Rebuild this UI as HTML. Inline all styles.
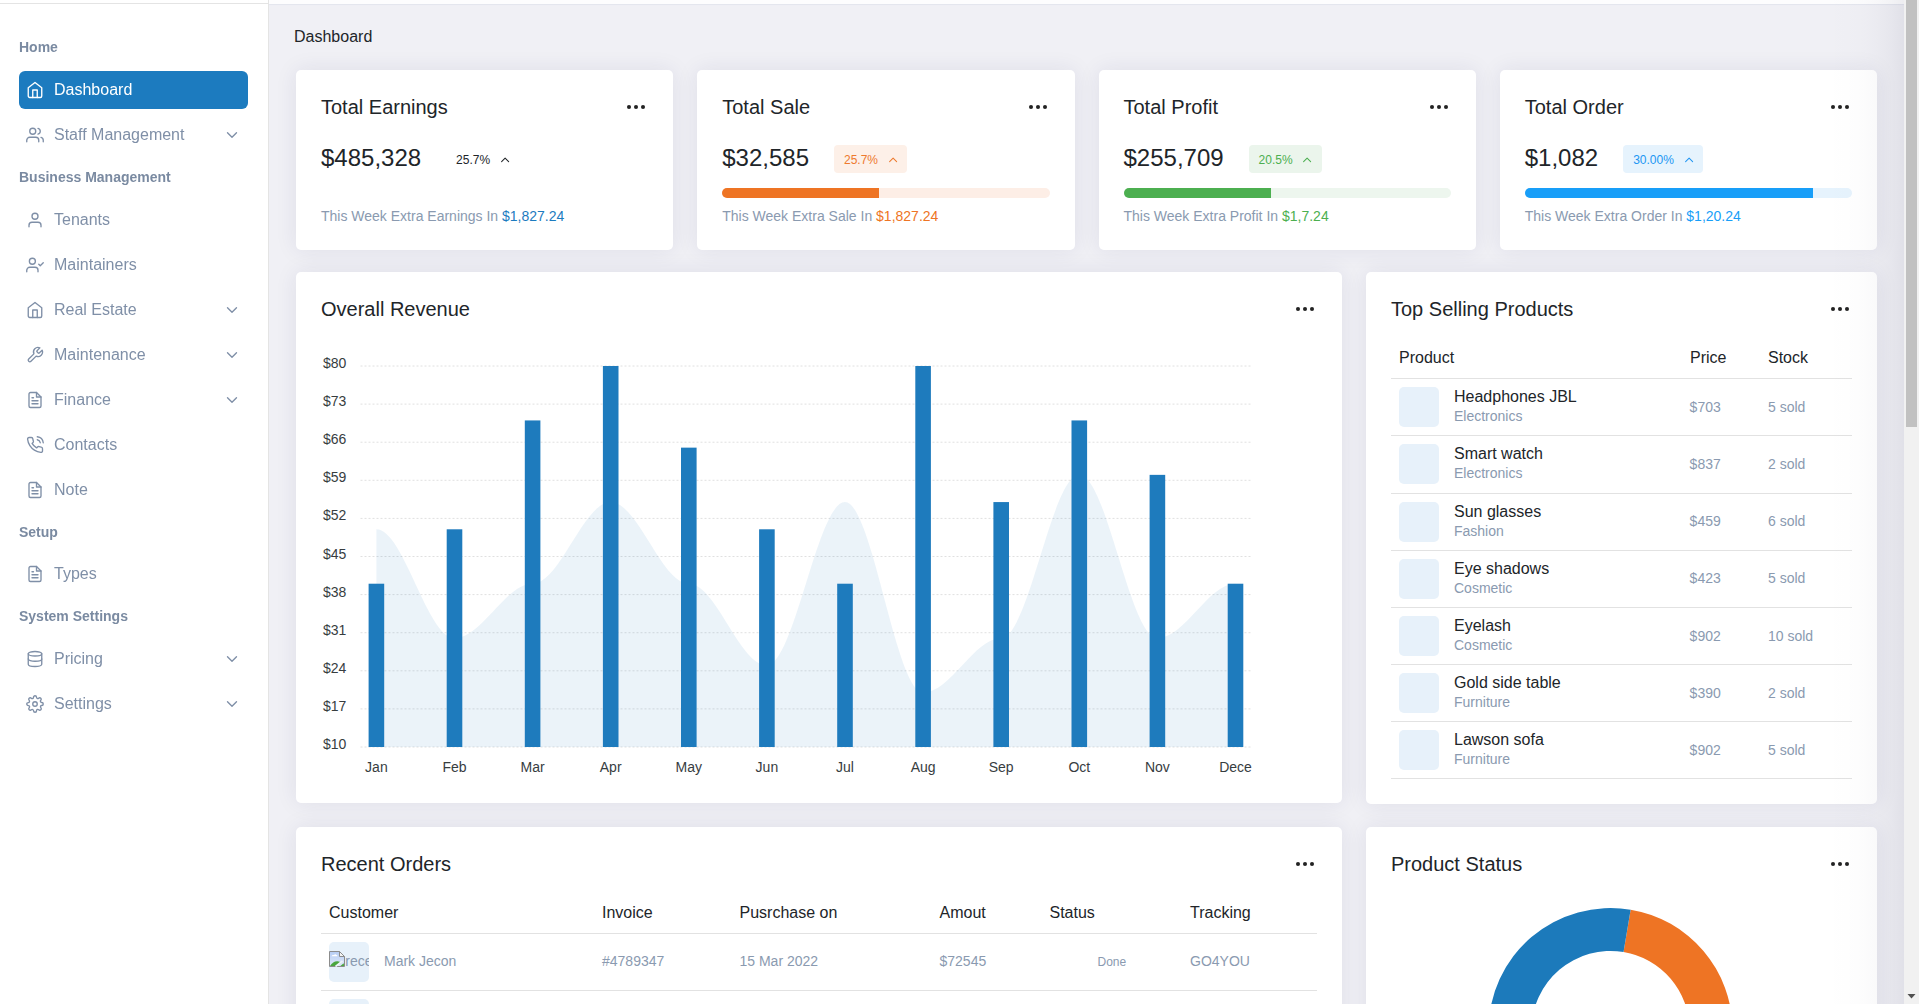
<!DOCTYPE html>
<html><head><meta charset="utf-8"><style>
html,body{margin:0;padding:0;width:1919px;height:1004px;overflow:hidden;background:#f0f0f5;font-family:"Liberation Sans", sans-serif}
.t{position:absolute;white-space:nowrap}
.ic{position:absolute;overflow:visible}
.sidebar{position:absolute;left:0;top:0;width:268px;height:1004px;background:#fff;border-right:1px solid #e4e4e4}
.card{position:absolute;background:#fff;border-radius:5px;box-shadow:0 0 22px rgba(40,40,90,0.085)}
.badge{position:absolute;height:28px;border-radius:4px;font-size:12px}
</style></head><body>
<div style="position:absolute;left:269px;top:0;width:1635px;height:4px;background:#fdfdfe;box-shadow:0 1px 1px rgba(60,90,160,0.07)"></div><div class="t" style="left:294px;top:29px;font-size:16px;line-height:16px;color:#212529;font-weight:normal;">Dashboard</div><div class="card" style="left:296.0px;top:70px;width:377.25px;height:180px"></div><div class="t" style="left:321.0px;top:97px;font-size:20px;line-height:20px;color:#212529;font-weight:normal;">Total Earnings</div><svg class="ic" style="left:624.25px;top:95px" width="24" height="24"><circle cx="5" cy="12" r="2.05" fill="#222"/><circle cx="12" cy="12" r="2.05" fill="#222"/><circle cx="19" cy="12" r="2.05" fill="#222"/></svg><div class="t" style="left:321.0px;top:146px;font-size:24px;line-height:24px;color:#212529;font-weight:normal;">$485,328</div><div class="badge" style="left:446.1px;top:145px;width:73px;background:transparent;color:#212529"><span style="position:absolute;left:10px;top:1px;line-height:28px">25.7%</span></div><svg class="ic" style="left:497.8px;top:152px" width="14" height="14" viewBox="-0.2 -1.5 24 24" fill="none" stroke="#212529" stroke-width="1.8" stroke-linecap="round" stroke-linejoin="round"><polyline points="18 15 12 9 6 15"/></svg><div class="t" style="left:321.0px;top:209px;font-size:14px;line-height:14px;color:#8a9ab0;font-weight:normal;">This Week Extra Earnings In <span style="color:#1c7bbf">$1,827.24</span></div><div class="card" style="left:697.25px;top:70px;width:377.25px;height:180px"></div><div class="t" style="left:722.25px;top:97px;font-size:20px;line-height:20px;color:#212529;font-weight:normal;">Total Sale</div><svg class="ic" style="left:1025.5px;top:95px" width="24" height="24"><circle cx="5" cy="12" r="2.05" fill="#222"/><circle cx="12" cy="12" r="2.05" fill="#222"/><circle cx="19" cy="12" r="2.05" fill="#222"/></svg><div class="t" style="left:722.25px;top:146px;font-size:24px;line-height:24px;color:#212529;font-weight:normal;">$32,585</div><div class="badge" style="left:834.0px;top:145px;width:73px;background:#fdf0e8;color:#ee7a2e"><span style="position:absolute;left:10px;top:1px;line-height:28px">25.7%</span></div><svg class="ic" style="left:885.7px;top:152px" width="14" height="14" viewBox="-0.2 -1.5 24 24" fill="none" stroke="#ee7a2e" stroke-width="1.8" stroke-linecap="round" stroke-linejoin="round"><polyline points="18 15 12 9 6 15"/></svg><div style="position:absolute;left:722.25px;top:188px;width:327.25px;height:10px;border-radius:5px;background:#fdeee6;overflow:hidden"><div style="width:47.9%;height:10px;background:#ee7424"></div></div><div class="t" style="left:722.25px;top:209px;font-size:14px;line-height:14px;color:#8a9ab0;font-weight:normal;">This Week Extra Sale In <span style="color:#ee7424">$1,827.24</span></div><div class="card" style="left:1098.5px;top:70px;width:377.25px;height:180px"></div><div class="t" style="left:1123.5px;top:97px;font-size:20px;line-height:20px;color:#212529;font-weight:normal;">Total Profit</div><svg class="ic" style="left:1426.75px;top:95px" width="24" height="24"><circle cx="5" cy="12" r="2.05" fill="#222"/><circle cx="12" cy="12" r="2.05" fill="#222"/><circle cx="19" cy="12" r="2.05" fill="#222"/></svg><div class="t" style="left:1123.5px;top:146px;font-size:24px;line-height:24px;color:#212529;font-weight:normal;">$255,709</div><div class="badge" style="left:1248.6px;top:145px;width:73px;background:#ebf5ec;color:#4caf50"><span style="position:absolute;left:10px;top:1px;line-height:28px">20.5%</span></div><svg class="ic" style="left:1300.3px;top:152px" width="14" height="14" viewBox="-0.2 -1.5 24 24" fill="none" stroke="#4caf50" stroke-width="1.8" stroke-linecap="round" stroke-linejoin="round"><polyline points="18 15 12 9 6 15"/></svg><div style="position:absolute;left:1123.5px;top:188px;width:327.25px;height:10px;border-radius:5px;background:#edf6ee;overflow:hidden"><div style="width:45.2%;height:10px;background:#4caf50"></div></div><div class="t" style="left:1123.5px;top:209px;font-size:14px;line-height:14px;color:#8a9ab0;font-weight:normal;">This Week Extra Profit In <span style="color:#4caf50">$1,7.24</span></div><div class="card" style="left:1499.75px;top:70px;width:377.25px;height:180px"></div><div class="t" style="left:1524.75px;top:97px;font-size:20px;line-height:20px;color:#212529;font-weight:normal;">Total Order</div><svg class="ic" style="left:1828.0px;top:95px" width="24" height="24"><circle cx="5" cy="12" r="2.05" fill="#222"/><circle cx="12" cy="12" r="2.05" fill="#222"/><circle cx="19" cy="12" r="2.05" fill="#222"/></svg><div class="t" style="left:1524.75px;top:146px;font-size:24px;line-height:24px;color:#212529;font-weight:normal;">$1,082</div><div class="badge" style="left:1623.15px;top:145px;width:80px;background:#e6f3fd;color:#2196f3"><span style="position:absolute;left:10px;top:1px;line-height:28px">30.00%</span></div><svg class="ic" style="left:1681.8500000000001px;top:152px" width="14" height="14" viewBox="-0.2 -1.5 24 24" fill="none" stroke="#2196f3" stroke-width="1.8" stroke-linecap="round" stroke-linejoin="round"><polyline points="18 15 12 9 6 15"/></svg><div style="position:absolute;left:1524.75px;top:188px;width:327.25px;height:10px;border-radius:5px;background:#e6f3fd;overflow:hidden"><div style="width:88.1%;height:10px;background:#189ef8"></div></div><div class="t" style="left:1524.75px;top:209px;font-size:14px;line-height:14px;color:#8a9ab0;font-weight:normal;">This Week Extra Order In <span style="color:#189ef8">$1,20.24</span></div><div class="card" style="left:296px;top:272px;width:1046px;height:531px"></div><div class="t" style="left:321px;top:299px;font-size:20px;line-height:20px;color:#212529;font-weight:normal;">Overall Revenue</div><svg class="ic" style="left:1293px;top:297px" width="24" height="24"><circle cx="5" cy="12" r="2.05" fill="#222"/><circle cx="12" cy="12" r="2.05" fill="#222"/><circle cx="19" cy="12" r="2.05" fill="#222"/></svg><svg style="position:absolute;left:0;top:0" width="1919" height="1004"><line x1="360.5" y1="747.00" x2="1251" y2="747.00" stroke="#e0e0e0" stroke-width="1" stroke-dasharray="2 2"/><line x1="360.5" y1="708.90" x2="1251" y2="708.90" stroke="#e0e0e0" stroke-width="1" stroke-dasharray="2 2"/><line x1="360.5" y1="670.80" x2="1251" y2="670.80" stroke="#e0e0e0" stroke-width="1" stroke-dasharray="2 2"/><line x1="360.5" y1="632.70" x2="1251" y2="632.70" stroke="#e0e0e0" stroke-width="1" stroke-dasharray="2 2"/><line x1="360.5" y1="594.60" x2="1251" y2="594.60" stroke="#e0e0e0" stroke-width="1" stroke-dasharray="2 2"/><line x1="360.5" y1="556.50" x2="1251" y2="556.50" stroke="#e0e0e0" stroke-width="1" stroke-dasharray="2 2"/><line x1="360.5" y1="518.40" x2="1251" y2="518.40" stroke="#e0e0e0" stroke-width="1" stroke-dasharray="2 2"/><line x1="360.5" y1="480.30" x2="1251" y2="480.30" stroke="#e0e0e0" stroke-width="1" stroke-dasharray="2 2"/><line x1="360.5" y1="442.20" x2="1251" y2="442.20" stroke="#e0e0e0" stroke-width="1" stroke-dasharray="2 2"/><line x1="360.5" y1="404.10" x2="1251" y2="404.10" stroke="#e0e0e0" stroke-width="1" stroke-dasharray="2 2"/><line x1="360.5" y1="366.00" x2="1251" y2="366.00" stroke="#e0e0e0" stroke-width="1" stroke-dasharray="2 2"/><path d="M376.40,529.29 C403.73,529.29 427.17,638.14 454.50,638.14 C481.83,638.14 505.26,583.71 532.60,583.71 C559.93,583.71 583.36,502.07 610.70,502.07 C638.03,502.07 661.46,583.71 688.80,583.71 C716.13,583.71 739.56,665.36 766.90,665.36 C794.24,665.36 817.66,502.07 845.00,502.07 C872.34,502.07 895.76,692.57 923.10,692.57 C950.43,692.57 973.86,638.14 1001.20,638.14 C1028.53,638.14 1051.96,474.86 1079.30,474.86 C1106.63,474.86 1130.07,638.14 1157.40,638.14 C1184.74,638.14 1208.16,583.71 1235.50,583.71 L1235.50,747 L376.40,747 Z" fill="#1e7bbd" fill-opacity="0.09"/><rect x="368.60" y="583.71" width="15.6" height="163.29" fill="#1e7bbd"/><rect x="446.70" y="529.29" width="15.6" height="217.71" fill="#1e7bbd"/><rect x="524.80" y="420.43" width="15.6" height="326.57" fill="#1e7bbd"/><rect x="602.90" y="366.00" width="15.6" height="381.00" fill="#1e7bbd"/><rect x="681.00" y="447.64" width="15.6" height="299.36" fill="#1e7bbd"/><rect x="759.10" y="529.29" width="15.6" height="217.71" fill="#1e7bbd"/><rect x="837.20" y="583.71" width="15.6" height="163.29" fill="#1e7bbd"/><rect x="915.30" y="366.00" width="15.6" height="381.00" fill="#1e7bbd"/><rect x="993.40" y="502.07" width="15.6" height="244.93" fill="#1e7bbd"/><rect x="1071.50" y="420.43" width="15.6" height="326.57" fill="#1e7bbd"/><rect x="1149.60" y="474.86" width="15.6" height="272.14" fill="#1e7bbd"/><rect x="1227.70" y="583.71" width="15.6" height="163.29" fill="#1e7bbd"/></svg><div class="t" style="left:323px;top:737px;font-size:14px;line-height:14px;color:#373d3f;font-weight:normal;">$10</div><div class="t" style="left:323px;top:699px;font-size:14px;line-height:14px;color:#373d3f;font-weight:normal;">$17</div><div class="t" style="left:323px;top:661px;font-size:14px;line-height:14px;color:#373d3f;font-weight:normal;">$24</div><div class="t" style="left:323px;top:623px;font-size:14px;line-height:14px;color:#373d3f;font-weight:normal;">$31</div><div class="t" style="left:323px;top:585px;font-size:14px;line-height:14px;color:#373d3f;font-weight:normal;">$38</div><div class="t" style="left:323px;top:547px;font-size:14px;line-height:14px;color:#373d3f;font-weight:normal;">$45</div><div class="t" style="left:323px;top:508px;font-size:14px;line-height:14px;color:#373d3f;font-weight:normal;">$52</div><div class="t" style="left:323px;top:470px;font-size:14px;line-height:14px;color:#373d3f;font-weight:normal;">$59</div><div class="t" style="left:323px;top:432px;font-size:14px;line-height:14px;color:#373d3f;font-weight:normal;">$66</div><div class="t" style="left:323px;top:394px;font-size:14px;line-height:14px;color:#373d3f;font-weight:normal;">$73</div><div class="t" style="left:323px;top:356px;font-size:14px;line-height:14px;color:#373d3f;font-weight:normal;">$80</div><div class="t" style="left:326.40px;width:100px;text-align:center;top:760px;font-size:14px;line-height:14px;color:#373d3f">Jan</div><div class="t" style="left:404.50px;width:100px;text-align:center;top:760px;font-size:14px;line-height:14px;color:#373d3f">Feb</div><div class="t" style="left:482.60px;width:100px;text-align:center;top:760px;font-size:14px;line-height:14px;color:#373d3f">Mar</div><div class="t" style="left:560.70px;width:100px;text-align:center;top:760px;font-size:14px;line-height:14px;color:#373d3f">Apr</div><div class="t" style="left:638.80px;width:100px;text-align:center;top:760px;font-size:14px;line-height:14px;color:#373d3f">May</div><div class="t" style="left:716.90px;width:100px;text-align:center;top:760px;font-size:14px;line-height:14px;color:#373d3f">Jun</div><div class="t" style="left:795.00px;width:100px;text-align:center;top:760px;font-size:14px;line-height:14px;color:#373d3f">Jul</div><div class="t" style="left:873.10px;width:100px;text-align:center;top:760px;font-size:14px;line-height:14px;color:#373d3f">Aug</div><div class="t" style="left:951.20px;width:100px;text-align:center;top:760px;font-size:14px;line-height:14px;color:#373d3f">Sep</div><div class="t" style="left:1029.30px;width:100px;text-align:center;top:760px;font-size:14px;line-height:14px;color:#373d3f">Oct</div><div class="t" style="left:1107.40px;width:100px;text-align:center;top:760px;font-size:14px;line-height:14px;color:#373d3f">Nov</div><div class="t" style="left:1185.50px;width:100px;text-align:center;top:760px;font-size:14px;line-height:14px;color:#373d3f">Dece</div><div class="card" style="left:1366px;top:272px;width:511px;height:532px"></div><div class="t" style="left:1391px;top:299px;font-size:20px;line-height:20px;color:#212529;font-weight:normal;">Top Selling Products</div><svg class="ic" style="left:1828px;top:297px" width="24" height="24"><circle cx="5" cy="12" r="2.05" fill="#222"/><circle cx="12" cy="12" r="2.05" fill="#222"/><circle cx="19" cy="12" r="2.05" fill="#222"/></svg><div class="t" style="left:1399px;top:350px;font-size:16px;line-height:16px;color:#212529;font-weight:normal;">Product</div><div class="t" style="left:1690px;top:350px;font-size:16px;line-height:16px;color:#212529;font-weight:normal;">Price</div><div class="t" style="left:1768px;top:350px;font-size:16px;line-height:16px;color:#212529;font-weight:normal;">Stock</div><div style="position:absolute;left:1391px;top:378px;width:461px;height:1px;background:#e2e2e2"></div><div style="position:absolute;left:1399px;top:387px;width:40px;height:40px;border-radius:5px;background:#e7f1fa"></div><div class="t" style="left:1454px;top:389px;font-size:16px;line-height:16px;color:#212529;font-weight:normal;">Headphones JBL</div><div class="t" style="left:1454px;top:409px;font-size:14px;line-height:14px;color:#8a9ab0;font-weight:normal;">Electronics</div><div class="t" style="left:1689.6px;top:400px;font-size:14px;line-height:14px;color:#8a9ab0;font-weight:normal;">$703</div><div class="t" style="left:1768px;top:400px;font-size:14px;line-height:14px;color:#8a9ab0;font-weight:normal;">5 sold</div><div style="position:absolute;left:1391px;top:435px;width:461px;height:1px;background:#e2e2e2"></div><div style="position:absolute;left:1399px;top:444px;width:40px;height:40px;border-radius:5px;background:#e7f1fa"></div><div class="t" style="left:1454px;top:446px;font-size:16px;line-height:16px;color:#212529;font-weight:normal;">Smart watch</div><div class="t" style="left:1454px;top:466px;font-size:14px;line-height:14px;color:#8a9ab0;font-weight:normal;">Electronics</div><div class="t" style="left:1689.6px;top:457px;font-size:14px;line-height:14px;color:#8a9ab0;font-weight:normal;">$837</div><div class="t" style="left:1768px;top:457px;font-size:14px;line-height:14px;color:#8a9ab0;font-weight:normal;">2 sold</div><div style="position:absolute;left:1391px;top:493px;width:461px;height:1px;background:#e2e2e2"></div><div style="position:absolute;left:1399px;top:502px;width:40px;height:40px;border-radius:5px;background:#e7f1fa"></div><div class="t" style="left:1454px;top:504px;font-size:16px;line-height:16px;color:#212529;font-weight:normal;">Sun glasses</div><div class="t" style="left:1454px;top:524px;font-size:14px;line-height:14px;color:#8a9ab0;font-weight:normal;">Fashion</div><div class="t" style="left:1689.6px;top:514px;font-size:14px;line-height:14px;color:#8a9ab0;font-weight:normal;">$459</div><div class="t" style="left:1768px;top:514px;font-size:14px;line-height:14px;color:#8a9ab0;font-weight:normal;">6 sold</div><div style="position:absolute;left:1391px;top:550px;width:461px;height:1px;background:#e2e2e2"></div><div style="position:absolute;left:1399px;top:559px;width:40px;height:40px;border-radius:5px;background:#e7f1fa"></div><div class="t" style="left:1454px;top:561px;font-size:16px;line-height:16px;color:#212529;font-weight:normal;">Eye shadows</div><div class="t" style="left:1454px;top:581px;font-size:14px;line-height:14px;color:#8a9ab0;font-weight:normal;">Cosmetic</div><div class="t" style="left:1689.6px;top:571px;font-size:14px;line-height:14px;color:#8a9ab0;font-weight:normal;">$423</div><div class="t" style="left:1768px;top:571px;font-size:14px;line-height:14px;color:#8a9ab0;font-weight:normal;">5 sold</div><div style="position:absolute;left:1391px;top:607px;width:461px;height:1px;background:#e2e2e2"></div><div style="position:absolute;left:1399px;top:616px;width:40px;height:40px;border-radius:5px;background:#e7f1fa"></div><div class="t" style="left:1454px;top:618px;font-size:16px;line-height:16px;color:#212529;font-weight:normal;">Eyelash</div><div class="t" style="left:1454px;top:638px;font-size:14px;line-height:14px;color:#8a9ab0;font-weight:normal;">Cosmetic</div><div class="t" style="left:1689.6px;top:629px;font-size:14px;line-height:14px;color:#8a9ab0;font-weight:normal;">$902</div><div class="t" style="left:1768px;top:629px;font-size:14px;line-height:14px;color:#8a9ab0;font-weight:normal;">10 sold</div><div style="position:absolute;left:1391px;top:664px;width:461px;height:1px;background:#e2e2e2"></div><div style="position:absolute;left:1399px;top:673px;width:40px;height:40px;border-radius:5px;background:#e7f1fa"></div><div class="t" style="left:1454px;top:675px;font-size:16px;line-height:16px;color:#212529;font-weight:normal;">Gold side table</div><div class="t" style="left:1454px;top:695px;font-size:14px;line-height:14px;color:#8a9ab0;font-weight:normal;">Furniture</div><div class="t" style="left:1689.6px;top:686px;font-size:14px;line-height:14px;color:#8a9ab0;font-weight:normal;">$390</div><div class="t" style="left:1768px;top:686px;font-size:14px;line-height:14px;color:#8a9ab0;font-weight:normal;">2 sold</div><div style="position:absolute;left:1391px;top:721px;width:461px;height:1px;background:#e2e2e2"></div><div style="position:absolute;left:1399px;top:730px;width:40px;height:40px;border-radius:5px;background:#e7f1fa"></div><div class="t" style="left:1454px;top:732px;font-size:16px;line-height:16px;color:#212529;font-weight:normal;">Lawson sofa</div><div class="t" style="left:1454px;top:752px;font-size:14px;line-height:14px;color:#8a9ab0;font-weight:normal;">Furniture</div><div class="t" style="left:1689.6px;top:743px;font-size:14px;line-height:14px;color:#8a9ab0;font-weight:normal;">$902</div><div class="t" style="left:1768px;top:743px;font-size:14px;line-height:14px;color:#8a9ab0;font-weight:normal;">5 sold</div><div style="position:absolute;left:1391px;top:778px;width:461px;height:1px;background:#e2e2e2"></div><div class="card" style="left:296px;top:827px;width:1046px;height:300px"></div><div class="t" style="left:321px;top:854px;font-size:20px;line-height:20px;color:#212529;font-weight:normal;">Recent Orders</div><svg class="ic" style="left:1293px;top:852px" width="24" height="24"><circle cx="5" cy="12" r="2.05" fill="#222"/><circle cx="12" cy="12" r="2.05" fill="#222"/><circle cx="19" cy="12" r="2.05" fill="#222"/></svg><div class="t" style="left:329px;top:905px;font-size:16px;line-height:16px;color:#212529;font-weight:normal;">Customer</div><div class="t" style="left:602px;top:905px;font-size:16px;line-height:16px;color:#212529;font-weight:normal;">Invoice</div><div class="t" style="left:739.5px;top:905px;font-size:16px;line-height:16px;color:#212529;font-weight:normal;">Pusrchase on</div><div class="t" style="left:939.5px;top:905px;font-size:16px;line-height:16px;color:#212529;font-weight:normal;">Amout</div><div class="t" style="left:1049.5px;top:905px;font-size:16px;line-height:16px;color:#212529;font-weight:normal;">Status</div><div class="t" style="left:1190px;top:905px;font-size:16px;line-height:16px;color:#212529;font-weight:normal;">Tracking</div><div style="position:absolute;left:321px;top:933px;width:996px;height:1px;background:#e2e2e2"></div><div style="position:absolute;left:329px;top:942px;width:40px;height:40px;border-radius:5px;background:#e7f1fa;overflow:hidden"></div><div style="position:absolute;left:329px;top:942px;width:40px;height:40px;overflow:hidden"><svg style="position:absolute;left:0;top:9px" width="17" height="17" viewBox="0 0 17 17"><defs><linearGradient id="sky" x1="0" y1="0" x2="0" y2="1"><stop offset="0" stop-color="#b7cdf3"/><stop offset="1" stop-color="#dfe9f9"/></linearGradient></defs><path d="M0.5,0.5 H10.5 L15.5,5.5 V15.5 H0.5 Z" fill="url(#sky)" stroke="#8c8c8c" stroke-width="1"/><path d="M10.5,0.5 V5.5 H15.5 Z" fill="#f4f4f4" stroke="#8c8c8c" stroke-width="1" stroke-linejoin="miter"/><path d="M2.5,5.3 Q3,3.6 5,4 Q6.2,2.4 7.6,4 Q8.6,4.1 8.4,5.3 Z" fill="#fff"/><path d="M1,15 Q4,10 8.5,10.2 Q11,10.4 12.5,11.6 L8,15 Z" fill="#4aa63e"/><path d="M11.3,15 L14.8,12.2 L15,15 Z" fill="#4aa63e"/><path d="M6.5,15.5 L13.5,10" stroke="#f0f4fa" stroke-width="1.6"/></svg><div class="t" style="left:16.3px;top:12px;font-size:14px;line-height:14px;color:#8a9ab0">rece</div></div><div class="t" style="left:384px;top:954px;font-size:14px;line-height:14px;color:#8a9ab0;font-weight:normal;">Mark Jecon</div><div class="t" style="left:602px;top:954px;font-size:14px;line-height:14px;color:#8a9ab0;font-weight:normal;">#4789347</div><div class="t" style="left:739.5px;top:954px;font-size:14px;line-height:14px;color:#8a9ab0;font-weight:normal;">15 Mar 2022</div><div class="t" style="left:939.5px;top:954px;font-size:14px;line-height:14px;color:#8a9ab0;font-weight:normal;">$72545</div><div class="t" style="left:1097.5px;top:956px;font-size:12px;line-height:12px;color:#8a9ab0;font-weight:normal;">Done</div><div class="t" style="left:1190px;top:954px;font-size:14px;line-height:14px;color:#8a9ab0;font-weight:normal;">GO4YOU</div><div style="position:absolute;left:321px;top:990px;width:996px;height:1px;background:#e2e2e2"></div><div style="position:absolute;left:329px;top:999px;width:40px;height:40px;border-radius:5px;background:#e7f1fa"></div><div class="card" style="left:1366px;top:827px;width:511px;height:300px"></div><div class="t" style="left:1391px;top:854px;font-size:20px;line-height:20px;color:#212529;font-weight:normal;">Product Status</div><svg class="ic" style="left:1828px;top:852px" width="24" height="24"><circle cx="5" cy="12" r="2.05" fill="#222"/><circle cx="12" cy="12" r="2.05" fill="#222"/><circle cx="19" cy="12" r="2.05" fill="#222"/></svg><svg style="position:absolute;left:0;top:0" width="1919" height="1004"><path d="M1630.64,909.67 A122,122 0 0 1 1631.69,1150.15 L1624.22,1107.80 A79,79 0 0 0 1623.54,952.08 Z" fill="#ee7424"/><path d="M1631.69,1150.15 A122,122 0 1 1 1630.64,909.67 L1623.54,952.08 A79,79 0 1 0 1624.22,1107.80 Z" fill="#1c7abb"/></svg><div style="position:absolute;left:1824px;top:0;width:80px;height:1004px;pointer-events:none;background:linear-gradient(to right, rgba(20,20,60,0) 0%, rgba(20,20,60,0.004) 25%, rgba(20,20,60,0.012) 50%, rgba(20,20,60,0.025) 66%, rgba(20,20,60,0.045) 84%, rgba(20,20,60,0.07) 100%)"></div><div style="position:absolute;left:1904px;top:0;width:15px;height:1004px;background:#f1f1f1"></div><div style="position:absolute;left:1906px;top:0;width:11px;height:427px;background:#c1c1c1"></div><svg style="position:absolute;left:1904px;top:989px" width="15" height="15"><path d="M3.5,5 L11.5,5 L7.5,9.5 Z" fill="#505050"/></svg>
<div style="position:absolute;left:0;top:0;width:268px;height:1004px;will-change:transform"><div class="sidebar"></div><div style="position:absolute;left:0;top:3px;width:268px;height:1px;background:#e4e4e4"></div><div style="position:absolute;left:19px;top:71px;width:229px;height:38px;border-radius:6px;background:#1c7bbf"></div><div class="t" style="left:19px;top:40px;font-size:14px;line-height:14px;color:#7a8aa1;font-weight:bold;">Home</div><div class="t" style="left:19px;top:170px;font-size:14px;line-height:14px;color:#7a8aa1;font-weight:bold;">Business Management</div><div class="t" style="left:19px;top:525px;font-size:14px;line-height:14px;color:#7a8aa1;font-weight:bold;">Setup</div><div class="t" style="left:19px;top:609px;font-size:14px;line-height:14px;color:#7a8aa1;font-weight:bold;">System Settings</div><div class="t" style="left:54px;top:82px;font-size:16px;line-height:16px;color:#ffffff;font-weight:normal;">Dashboard</div><svg class="ic" style="left:26px;top:81px" width="18" height="18" viewBox="0 0 24 24" fill="none" stroke="#ffffff" stroke-width="1.8" stroke-linecap="round" stroke-linejoin="round"><path d="M3 9l9-7 9 7v11a2 2 0 0 1-2 2H5a2 2 0 0 1-2-2z"/><polyline points="9 22 9 12 15 12 15 22"/></svg><div class="t" style="left:54px;top:127px;font-size:16px;line-height:16px;color:#7f8fa7;font-weight:normal;">Staff Management</div><svg class="ic" style="left:26px;top:126px" width="18" height="18" viewBox="0 0 24 24" fill="none" stroke="#7f8fa7" stroke-width="1.8" stroke-linecap="round" stroke-linejoin="round"><path d="M17 21v-2a4 4 0 0 0-4-4H5a4 4 0 0 0-4 4v2"/><circle cx="9" cy="7" r="4"/><path d="M23 21v-2a4 4 0 0 0-3-3.87"/><path d="M16 3.13a4 4 0 0 1 0 7.75"/></svg><svg class="ic" style="left:223.25px;top:126px" width="18" height="18" viewBox="0 0 24 24" fill="none" stroke="#7f8fa7" stroke-width="1.8" stroke-linecap="round" stroke-linejoin="round"><polyline points="6 9 12 15 18 9"/></svg><div class="t" style="left:54px;top:212px;font-size:16px;line-height:16px;color:#7f8fa7;font-weight:normal;">Tenants</div><svg class="ic" style="left:26px;top:211px" width="18" height="18" viewBox="0 0 24 24" fill="none" stroke="#7f8fa7" stroke-width="1.8" stroke-linecap="round" stroke-linejoin="round"><path d="M20 21v-2a4 4 0 0 0-4-4H8a4 4 0 0 0-4 4v2"/><circle cx="12" cy="7" r="4"/></svg><div class="t" style="left:54px;top:257px;font-size:16px;line-height:16px;color:#7f8fa7;font-weight:normal;">Maintainers</div><svg class="ic" style="left:26px;top:256px" width="18" height="18" viewBox="0 0 24 24" fill="none" stroke="#7f8fa7" stroke-width="1.8" stroke-linecap="round" stroke-linejoin="round"><path d="M16 21v-2a4 4 0 0 0-4-4H5a4 4 0 0 0-4 4v2"/><circle cx="8.5" cy="7" r="4"/><polyline points="17 11 19 13 23 9"/></svg><div class="t" style="left:54px;top:302px;font-size:16px;line-height:16px;color:#7f8fa7;font-weight:normal;">Real Estate</div><svg class="ic" style="left:26px;top:301px" width="18" height="18" viewBox="0 0 24 24" fill="none" stroke="#7f8fa7" stroke-width="1.8" stroke-linecap="round" stroke-linejoin="round"><path d="M3 9l9-7 9 7v11a2 2 0 0 1-2 2H5a2 2 0 0 1-2-2z"/><polyline points="9 22 9 12 15 12 15 22"/></svg><svg class="ic" style="left:223.25px;top:301px" width="18" height="18" viewBox="0 0 24 24" fill="none" stroke="#7f8fa7" stroke-width="1.8" stroke-linecap="round" stroke-linejoin="round"><polyline points="6 9 12 15 18 9"/></svg><div class="t" style="left:54px;top:347px;font-size:16px;line-height:16px;color:#7f8fa7;font-weight:normal;">Maintenance</div><svg class="ic" style="left:26px;top:346px" width="18" height="18" viewBox="0 0 24 24" fill="none" stroke="#7f8fa7" stroke-width="1.8" stroke-linecap="round" stroke-linejoin="round"><path d="M14.7 6.3a1 1 0 0 0 0 1.4l1.6 1.6a1 1 0 0 0 1.4 0l3.77-3.77a6 6 0 0 1-7.94 7.94l-6.91 6.91a2.12 2.12 0 0 1-3-3l6.91-6.91a6 6 0 0 1 7.94-7.94l-3.76 3.76z"/></svg><svg class="ic" style="left:223.25px;top:346px" width="18" height="18" viewBox="0 0 24 24" fill="none" stroke="#7f8fa7" stroke-width="1.8" stroke-linecap="round" stroke-linejoin="round"><polyline points="6 9 12 15 18 9"/></svg><div class="t" style="left:54px;top:392px;font-size:16px;line-height:16px;color:#7f8fa7;font-weight:normal;">Finance</div><svg class="ic" style="left:26px;top:391px" width="18" height="18" viewBox="0 0 24 24" fill="none" stroke="#7f8fa7" stroke-width="1.8" stroke-linecap="round" stroke-linejoin="round"><path d="M14 2H6a2 2 0 0 0-2 2v16a2 2 0 0 0 2 2h12a2 2 0 0 0 2-2V8z"/><polyline points="14 2 14 8 20 8"/><line x1="16" y1="13" x2="8" y2="13"/><line x1="16" y1="17" x2="8" y2="17"/><polyline points="10 9 9 9 8 9"/></svg><svg class="ic" style="left:223.25px;top:391px" width="18" height="18" viewBox="0 0 24 24" fill="none" stroke="#7f8fa7" stroke-width="1.8" stroke-linecap="round" stroke-linejoin="round"><polyline points="6 9 12 15 18 9"/></svg><div class="t" style="left:54px;top:437px;font-size:16px;line-height:16px;color:#7f8fa7;font-weight:normal;">Contacts</div><svg class="ic" style="left:26px;top:436px" width="18" height="18" viewBox="0 0 24 24" fill="none" stroke="#7f8fa7" stroke-width="1.8" stroke-linecap="round" stroke-linejoin="round"><path d="M15.05 5A5 5 0 0 1 19 8.95M15.05 1A9 9 0 0 1 23 8.94m-1 7.98v3a2 2 0 0 1-2.18 2 19.79 19.79 0 0 1-8.63-3.07 19.5 19.5 0 0 1-6-6 19.79 19.79 0 0 1-3.07-8.67A2 2 0 0 1 4.11 2h3a2 2 0 0 1 2 1.72 12.84 12.84 0 0 0 .7 2.81 2 2 0 0 1-.45 2.11L8.09 9.91a16 16 0 0 0 6 6l1.27-1.27a2 2 0 0 1 2.11-.45 12.84 12.84 0 0 0 2.81.7A2 2 0 0 1 22 16.92z"/></svg><div class="t" style="left:54px;top:482px;font-size:16px;line-height:16px;color:#7f8fa7;font-weight:normal;">Note</div><svg class="ic" style="left:26px;top:481px" width="18" height="18" viewBox="0 0 24 24" fill="none" stroke="#7f8fa7" stroke-width="1.8" stroke-linecap="round" stroke-linejoin="round"><path d="M14 2H6a2 2 0 0 0-2 2v16a2 2 0 0 0 2 2h12a2 2 0 0 0 2-2V8z"/><polyline points="14 2 14 8 20 8"/><line x1="16" y1="13" x2="8" y2="13"/><line x1="16" y1="17" x2="8" y2="17"/><polyline points="10 9 9 9 8 9"/></svg><div class="t" style="left:54px;top:566px;font-size:16px;line-height:16px;color:#7f8fa7;font-weight:normal;">Types</div><svg class="ic" style="left:26px;top:565px" width="18" height="18" viewBox="0 0 24 24" fill="none" stroke="#7f8fa7" stroke-width="1.8" stroke-linecap="round" stroke-linejoin="round"><path d="M14 2H6a2 2 0 0 0-2 2v16a2 2 0 0 0 2 2h12a2 2 0 0 0 2-2V8z"/><polyline points="14 2 14 8 20 8"/><line x1="16" y1="13" x2="8" y2="13"/><line x1="16" y1="17" x2="8" y2="17"/><polyline points="10 9 9 9 8 9"/></svg><div class="t" style="left:54px;top:651px;font-size:16px;line-height:16px;color:#7f8fa7;font-weight:normal;">Pricing</div><svg class="ic" style="left:26px;top:650px" width="18" height="18" viewBox="0 0 24 24" fill="none" stroke="#7f8fa7" stroke-width="1.8" stroke-linecap="round" stroke-linejoin="round"><ellipse cx="12" cy="5" rx="9" ry="3"/><path d="M21 12c0 1.66-4 3-9 3s-9-1.34-9-3"/><path d="M3 5v14c0 1.66 4 3 9 3s9-1.34 9-3V5"/></svg><svg class="ic" style="left:223.25px;top:650px" width="18" height="18" viewBox="0 0 24 24" fill="none" stroke="#7f8fa7" stroke-width="1.8" stroke-linecap="round" stroke-linejoin="round"><polyline points="6 9 12 15 18 9"/></svg><div class="t" style="left:54px;top:696px;font-size:16px;line-height:16px;color:#7f8fa7;font-weight:normal;">Settings</div><svg class="ic" style="left:26px;top:695px" width="18" height="18" viewBox="0 0 24 24" fill="none" stroke="#7f8fa7" stroke-width="1.8" stroke-linecap="round" stroke-linejoin="round"><circle cx="12" cy="12" r="3"/><path d="M19.4 15a1.65 1.65 0 0 0 .33 1.82l.06.06a2 2 0 0 1 0 2.83 2 2 0 0 1-2.83 0l-.06-.06a1.65 1.65 0 0 0-1.82-.33 1.65 1.65 0 0 0-1 1.51V21a2 2 0 0 1-2 2 2 2 0 0 1-2-2v-.09A1.65 1.65 0 0 0 9 19.4a1.65 1.65 0 0 0-1.82.33l-.06.06a2 2 0 0 1-2.830 0 2 2 0 0 1 0-2.83l.06-.06a1.65 1.65 0 0 0 .33-1.82 1.65 1.65 0 0 0-1.51-1H3a2 2 0 0 1-2-2 2 2 0 0 1 2-2h.09A1.650 1.65 0 0 0 4.6 9a1.65 1.65 0 0 0-.33-1.82l-.06-.06a2 2 0 0 1 0-2.83 2 2 0 0 1 2.83 0l.06.06a1.65 1.65 0 0 0 1.82.33H9a1.65 1.65 0 0 0 1-1.51V3a2 2 0 0 1 2-2 2 2 0 0 1 2 2v.09a1.65 1.65 0 0 0 1 1.51 1.65 1.65 0 0 0 1.82-.33l.06-.06a2 2 0 0 1 2.83 0 2 2 0 0 1 0 2.83l-.06.06a1.65 1.65 0 0 0-.33 1.82V9a1.65 1.65 0 0 0 1.51 1H21a2 2 0 0 1 2 2 2 2 0 0 1-2 2h-.09a1.65 1.65 0 0 0-1.51 1z"/></svg><svg class="ic" style="left:223.25px;top:695px" width="18" height="18" viewBox="0 0 24 24" fill="none" stroke="#7f8fa7" stroke-width="1.8" stroke-linecap="round" stroke-linejoin="round"><polyline points="6 9 12 15 18 9"/></svg></div>
</body></html>
